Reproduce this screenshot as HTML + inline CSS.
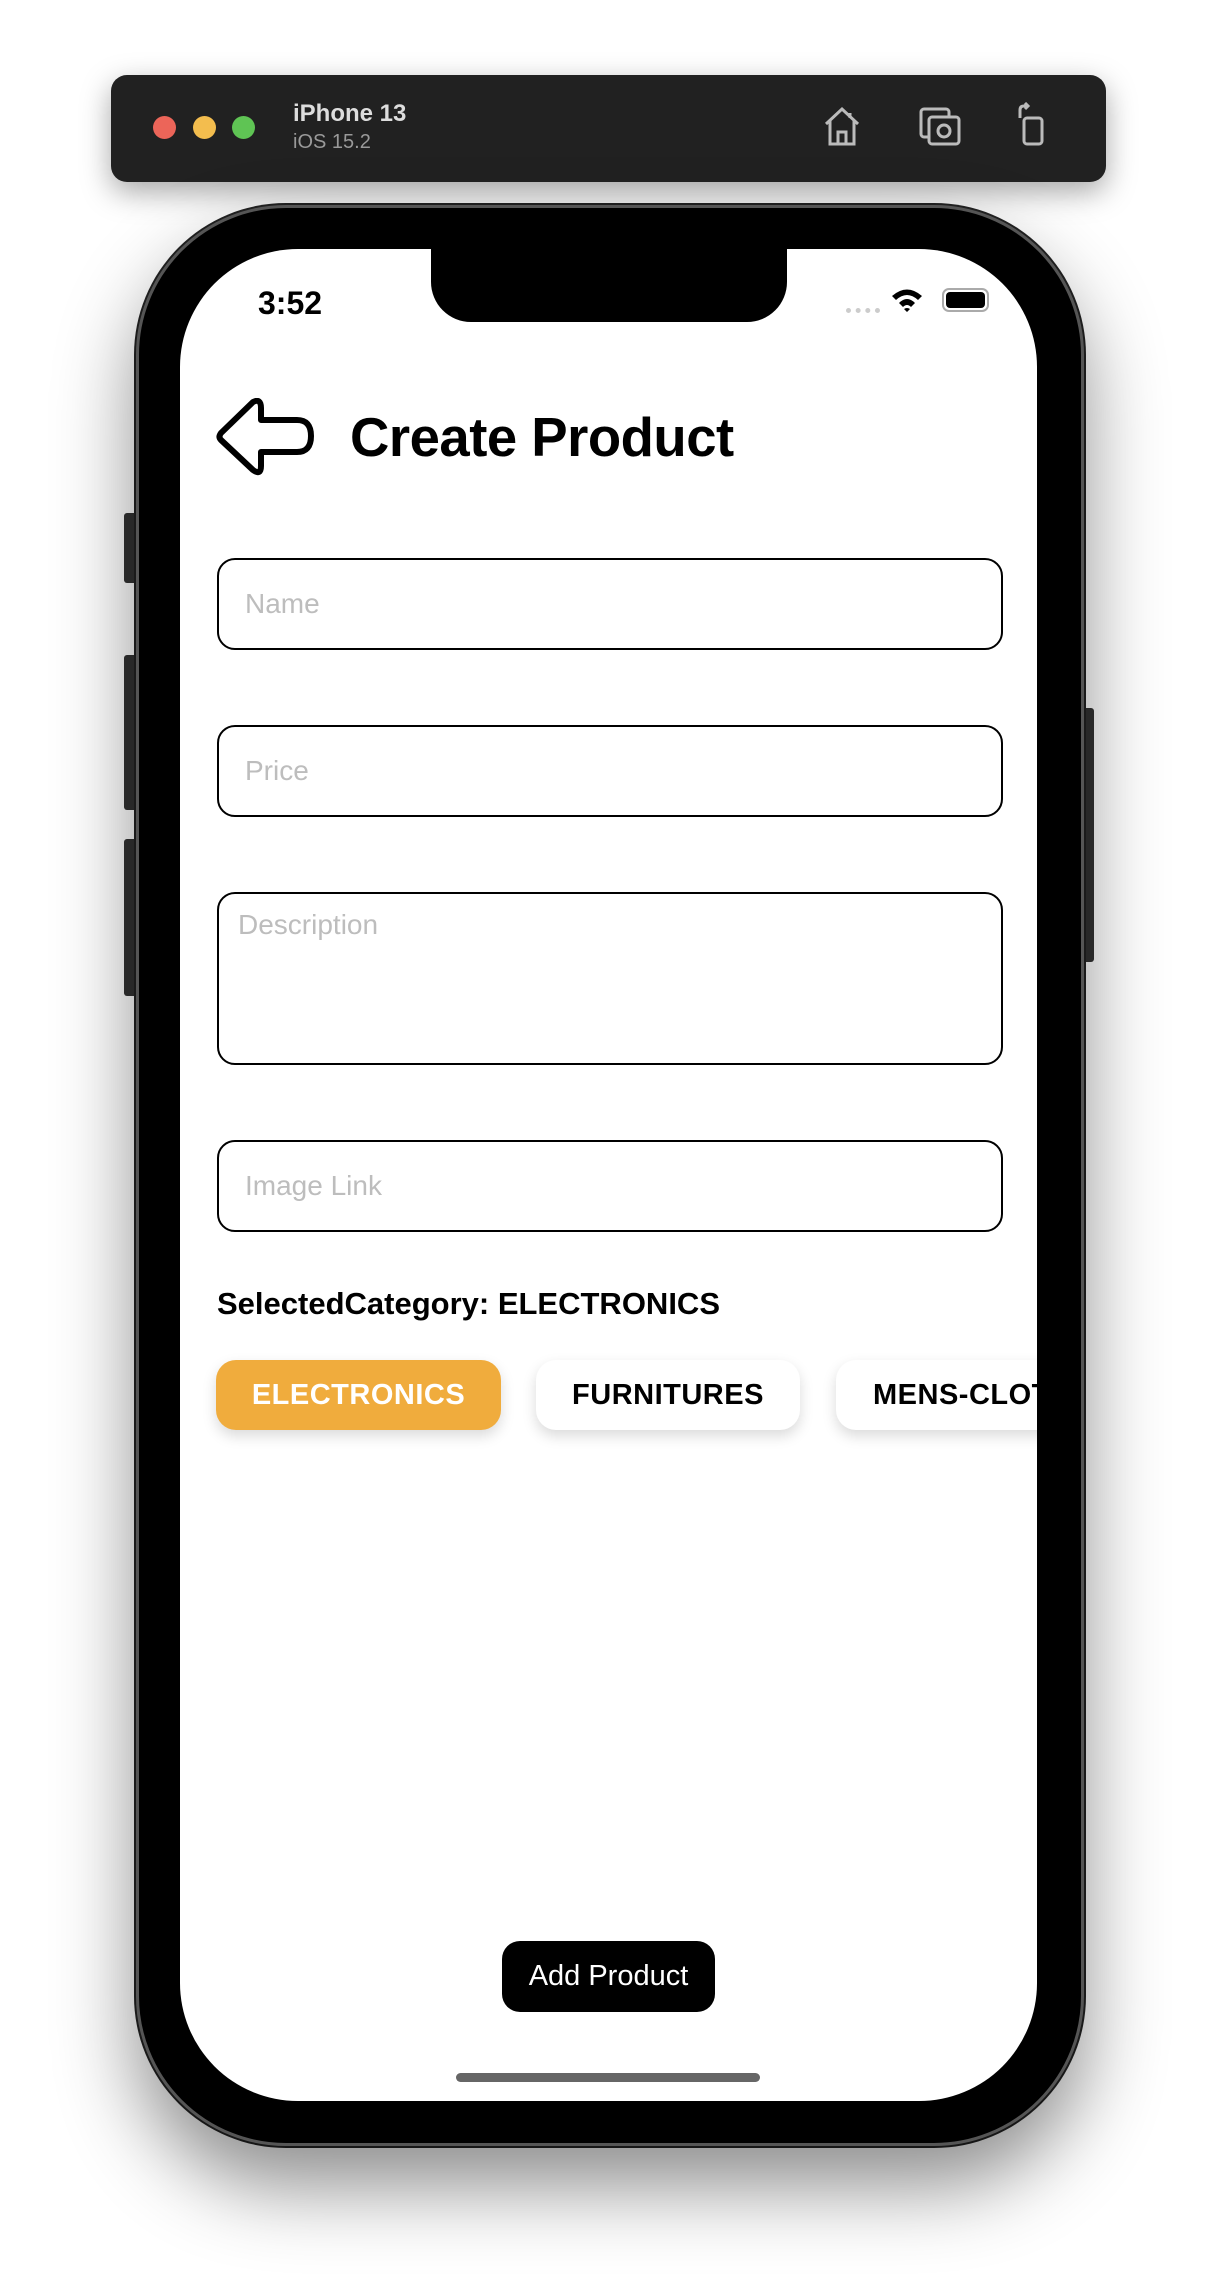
<!DOCTYPE html>
<html><head><meta charset="utf-8"><style>
*{margin:0;padding:0;box-sizing:border-box}
body{width:1216px;height:2294px;background:#fff;position:relative;overflow:hidden;font-family:"Liberation Sans",sans-serif}
.abs{position:absolute}
.bar{left:111px;top:75px;width:995px;height:107px;background:#212121;border-radius:16px;box-shadow:0 10px 30px rgba(0,0,0,.35)}
.dot{width:23px;height:23px;border-radius:50%;top:116px}
.phone{left:136px;top:205px;width:948px;height:1941px;background:#000;border-radius:150px;border:3px solid #555;box-shadow:0 40px 80px rgba(0,0,0,.45),0 0 0 2px #222}
.screen{left:180px;top:249px;width:857px;height:1852px;background:#fff;border-radius:118px;overflow:hidden}
.inp{left:37px;width:786px;border:2px solid #000;border-radius:18px;font-size:28px;color:#bdbdbd;padding-left:26px}
.chip{top:1111px;height:70px;border-radius:20px;font-size:29px;font-weight:bold;display:flex;align-items:center;justify-content:center;box-shadow:0 6px 14px rgba(0,0,0,.15);letter-spacing:.5px;white-space:nowrap;overflow:hidden}
</style></head><body>
<div class="abs bar"></div>
<div class="abs dot" style="left:153px;background:#ec6559"></div>
<div class="abs dot" style="left:193px;background:#f3bd4e"></div>
<div class="abs dot" style="left:232px;background:#5fc454"></div>
<div class="abs" style="left:293px;top:100px;color:#ddd;font-size:24px;font-weight:bold">iPhone 13</div>
<div class="abs" style="left:293px;top:131px;color:#999;font-size:20px">iOS 15.2</div>
<svg class="abs" style="left:822px;top:104px" width="40" height="44" viewBox="0 0 40 44" fill="none" stroke="#bbb" stroke-width="3"><path d="M4 20 L20 5 L36 20 M8 17 V40 H32 V17 M16 40 V28 H24 V40 M28 9 V14"/></svg>
<svg class="abs" style="left:918px;top:104px" width="44" height="44" viewBox="0 0 44 44" fill="none" stroke="#bbb" stroke-width="3"><rect x="3" y="5" width="28" height="28" rx="3"/><rect x="11" y="13" width="30" height="27" rx="3" fill="#212121"/><circle cx="26" cy="27" r="6"/></svg>
<svg class="abs" style="left:1014px;top:102px" width="36" height="46" viewBox="0 0 36 46" fill="none" stroke="#bbb" stroke-width="3"><rect x="10" y="16" width="18" height="26" rx="3"/><path d="M6 16 V8 Q6 4 10 4 H14 M11 1 L14 4 L11 7"/></svg>
<div class="abs" style="left:124px;top:513px;width:14px;height:70px;background:#333;border-radius:3px"></div>
<div class="abs" style="left:124px;top:655px;width:14px;height:155px;background:#333;border-radius:3px"></div>
<div class="abs" style="left:124px;top:839px;width:14px;height:157px;background:#333;border-radius:3px"></div>
<div class="abs" style="left:1082px;top:708px;width:12px;height:254px;background:#333;border-radius:3px"></div>
<div class="abs phone"></div>
<div class="abs screen">
 <div class="abs" style="left:251px;top:-40px;width:356px;height:113px;background:#000;border-radius:0 0 40px 40px"></div>
 <div class="abs" style="left:78px;top:36px;font-size:32px;font-weight:bold">3:52</div>
 <div class="abs" style="left:666px;top:59px;width:34px;height:5px;border-top:5px dotted #ccc"></div>
 <svg class="abs" style="left:710px;top:38px" width="34" height="26" viewBox="0 0 34 26"><path d="M2 9 Q17 -4 32 9 L28 13 Q17 3 6 13Z M9 16 Q17 8 25 16 L21 20 Q17 16 13 20Z M17 25 L14 22 Q17 20 20 22Z" fill="#000"/></svg>
 <div class="abs" style="left:762px;top:39px;width:47px;height:24px;border:2px solid #aaa;border-radius:7px;padding:2px"><div style="width:100%;height:100%;background:#000;border-radius:4px"></div></div>
 <svg class="abs" style="left:35px;top:149px" width="100" height="78" viewBox="0 0 100 78" fill="none" stroke="#000" stroke-width="6" stroke-linejoin="round"><path d="M38 4 Q46 0 46 10 V22 H82 Q96 22 96 38 Q96 54 82 54 H46 V68 Q46 78 38 72 L6 42 Q3 39 6 35 Z"/></svg>
 <div class="abs" style="left:170px;top:157px;font-size:54.5px;font-weight:bold;letter-spacing:-.5px">Create Product</div>
 <div class="abs inp" style="top:309px;height:92px;line-height:88px">Name</div>
 <div class="abs inp" style="top:476px;height:92px;line-height:88px">Price</div>
 <div class="abs inp" style="top:643px;height:173px;padding-left:19px;padding-top:14px;line-height:34px">Description</div>
 <div class="abs inp" style="top:891px;height:92px;line-height:88px">Image Link</div>
 <div class="abs" style="left:37px;top:1037px;font-size:31px;font-weight:bold">SelectedCategory: ELECTRONICS</div>
 <div class="abs chip" style="left:36px;width:285px;background:#f0ac3d;color:#fff">ELECTRONICS</div>
 <div class="abs chip" style="left:356px;width:264px;background:#fff;color:#000">FURNITURES</div>
 <div class="abs chip" style="left:656px;width:300px;background:#fff;color:#000;justify-content:flex-start;padding-left:37px">MENS-CLOTHING</div>
 <div class="abs" style="left:322px;top:1692px;width:213px;height:71px;background:#000;color:#fff;border-radius:18px;font-size:29px;display:flex;align-items:center;justify-content:center">Add Product</div>
 <div class="abs" style="left:276px;top:1824px;width:304px;height:9px;background:#666;border-radius:5px"></div>
</div>
</body></html>
